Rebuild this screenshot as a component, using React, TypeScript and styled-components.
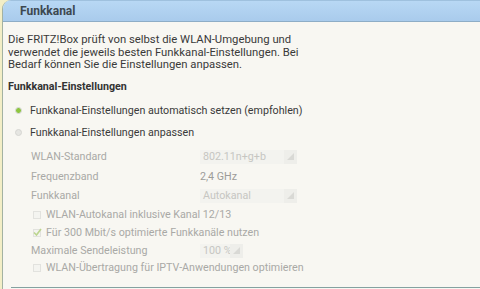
import React from "react";
import styled, { createGlobalStyle } from "styled-components";

const Global = createGlobalStyle`
  html, body { margin: 0; padding: 0; background: #f8f7f2; }
  body { font-family: Roboto, "Liberation Sans", Arial, sans-serif; }
`;

const Page = styled.div`
  width: 480px;
  height: 289px;
  overflow: hidden;
  background: #f3eec6;
  padding-left: 2px;
  box-sizing: border-box;
`;

const Panel = styled.section`
  height: 100%;
  background: #f8f7f2;
  border-left: 1px solid #a3b2a2;
  border-top-left-radius: 9px;
  overflow: hidden;
`;

const Header = styled.h2`
  margin: 0;
  height: 20px;
  border-top: 1px solid #9fc1de;
  border-bottom: 1px solid #8eadc6;
  background: linear-gradient(#b8d8f4, #a9cbec);
  padding-left: 17px;
  font-size: 12px;
  font-weight: 700;
  line-height: 20px;
  color: #3d4850;
`;

const Body = styled.div`
  padding: 12px 0 0 5px;
  font-size: 10.7px;
  color: #3a3a3a;
`;

const Intro = styled.p`
  margin: 0;
  font-size: 11.3px;
  line-height: 12.5px;
`;

const Row = styled.div<{ $mt: number; $indent?: number }>`
  display: flex;
  align-items: center;
  height: 14px;
  line-height: 14px;
  margin-top: ${(p) => p.$mt}px;
  padding-left: ${(p) => p.$indent ?? 0}px;
  white-space: nowrap;
`;

const Heading = styled(Row)`
  font-weight: 700;
  color: #333;
`;

const Radio = styled.span<{ $on?: boolean }>`
  width: 7px;
  height: 7px;
  border-radius: 50%;
  box-sizing: border-box;
  margin: 0 8px 0 7px;
  background: ${(p) =>
    p.$on
      ? "radial-gradient(circle, #8ec63f 0 2.2px, #d9e2cc 2.6px)"
      : "#e6e6e2"};
  border: 1px solid ${(p) => (p.$on ? "#cdd3c6" : "#d6d6d2")};
`;

const Label = styled.span<{ $disabled?: boolean }>`
  color: ${(p) => (p.$disabled ? "#a9a9a6" : "#3a3a3a")};
`;

const Field = styled.span`
  width: 169px;
  color: #a9a9a6;
`;

const Value = styled.span`
  color: #9c9c99;
`;

const Select = styled.span<{ $w: number }>`
  display: flex;
  width: ${(p) => p.$w}px;
  height: 14px;
  background: #f3f3ef;
  box-sizing: border-box;
`;

const SelectText = styled.span`
  flex: 1;
  padding-left: 3px;
  color: #c6c6c2;
  line-height: 14px;
  overflow: hidden;
`;

const SelectArrow = styled.span`
  width: 13px;
  background: #eeeeea;
  display: flex;
  align-items: center;
  justify-content: center;
`;

const Check = styled.span`
  width: 8px;
  height: 8px;
  box-sizing: border-box;
  border: 1px solid #e2e2de;
  background: #f4f4f0;
  margin: 0 5px 0 25px;
  position: relative;
`;

const Divider = styled.hr`
  margin: 12px 0 0 8px;
  border: 0;
  border-top: 1px solid #84a1a0;
`;

const Tri = () => (
  <svg width="7" height="7" viewBox="0 0 7 7">
    <polygon points="7,0 7,7 0,7" fill="#d9d9d5" />
  </svg>
);

const Tick = () => (
  <svg
    width="9"
    height="8"
    viewBox="0 0 9 8"
    style={{ position: "absolute", left: -1, top: -2 }}
  >
    <polyline points="1,4.5 3.5,7 8,1" fill="none" stroke="#bcd58e" strokeWidth="1.6" />
  </svg>
);

const SelectBox = ({ w, text }: { w: number; text: string }) => (
  <Select $w={w}>
    <SelectText>{text}</SelectText>
    <SelectArrow>
      <Tri />
    </SelectArrow>
  </Select>
);

export default function App() {
  return (
    <>
      <Global />
      <Page>
        <Panel>
          <Header>Funkkanal</Header>
          <Body>
            <Intro>
              Die FRITZ!Box prüft von selbst die WLAN-Umgebung und
              <br />
              verwendet die jeweils besten Funkkanal-Einstellungen. Bei
              <br />
              Bedarf können Sie die Einstellungen anpassen.
            </Intro>
            <Heading $mt={8}>Funkkanal-Einstellungen</Heading>
            <Row $mt={10}>
              <Radio $on />
              <Label>Funkkanal-Einstellungen automatisch setzen (empfohlen)</Label>
            </Row>
            <Row $mt={8}>
              <Radio />
              <Label>Funkkanal-Einstellungen anpassen</Label>
            </Row>
            <Row $mt={10} $indent={23}>
              <Field>WLAN-Standard</Field>
              <SelectBox w={97} text="802.11n+g+b" />
            </Row>
            <Row $mt={6} $indent={23}>
              <Field>Frequenzband</Field>
              <Value>2,4 GHz</Value>
            </Row>
            <Row $mt={5} $indent={23}>
              <Field>Funkkanal</Field>
              <SelectBox w={97} text="Autokanal" />
            </Row>
            <Row $mt={5}>
              <Check />
              <Label $disabled>WLAN-Autokanal inklusive Kanal 12/13</Label>
            </Row>
            <Row $mt={4}>
              <Check>
                <Tick />
              </Check>
              <Label $disabled>Für 300 Mbit/s optimierte Funkkanäle nutzen</Label>
            </Row>
            <Row $mt={4} $indent={23}>
              <Field>Maximale Sendeleistung</Field>
              <SelectBox w={43} text="100 %" />
            </Row>
            <Row $mt={3}>
              <Check />
              <Label $disabled>WLAN-Übertragung für IPTV-Anwendungen optimieren</Label>
            </Row>
          </Body>
          <Divider />
        </Panel>
      </Page>
    </>
  );
}
